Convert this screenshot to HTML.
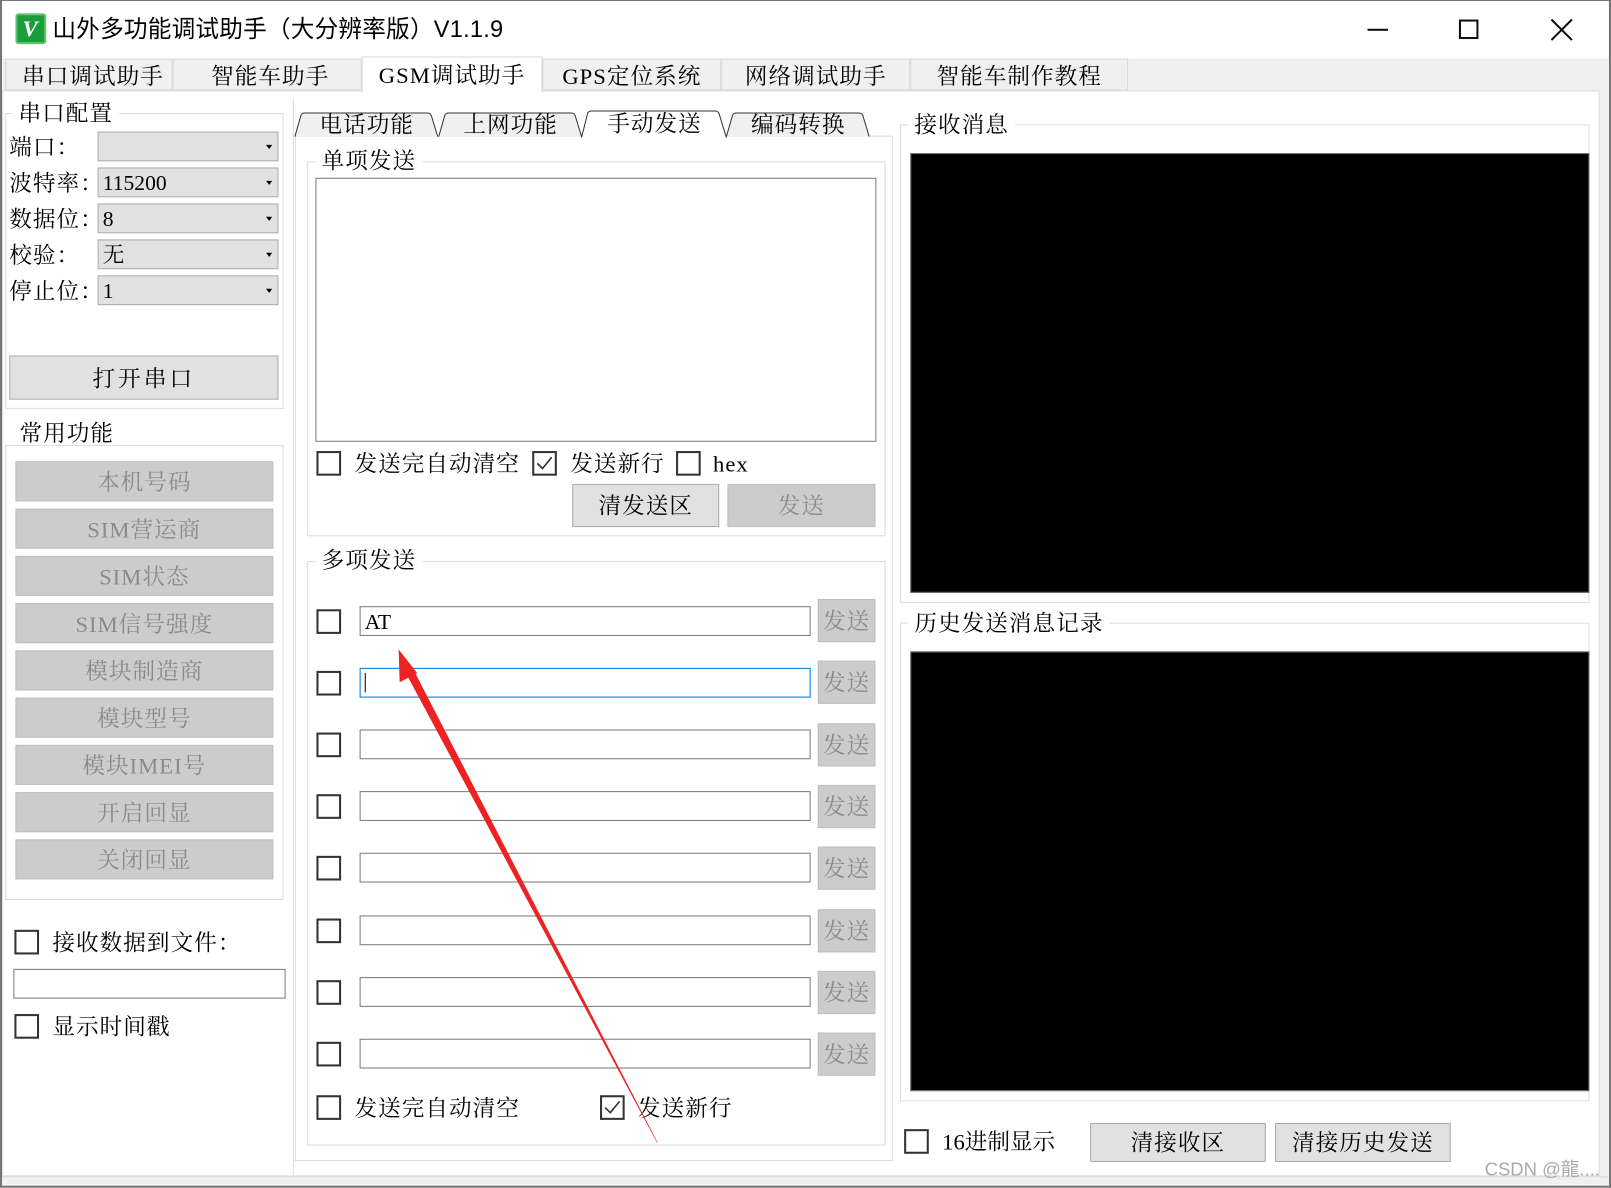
<!DOCTYPE html>
<html><head><meta charset="utf-8"><style>
html,body{margin:0;padding:0;width:1611px;height:1188px;overflow:hidden;background:#fff}
#w{position:absolute;left:0;top:0;width:1568px;height:1156px;transform:scale(1.02742);transform-origin:0 0;background:#fff;font-family:"Liberation Serif","Noto Serif CJK SC",serif;color:#000;font-size:22px;letter-spacing:1px}
.a{position:absolute;box-sizing:border-box}
.t{position:absolute;white-space:nowrap;line-height:1}
.grp{position:absolute;box-sizing:border-box;border:1px solid #dcdcdc}
.lbl{position:absolute;background:#fff;padding:0 6px;white-space:nowrap;line-height:1;font-size:22px}
.cb{position:absolute;width:24px;height:24px;box-sizing:border-box;border:2px solid #333;background:#fff}
.btn{position:absolute;box-sizing:border-box;background:#e1e1e1;border:1px solid #adadad;text-align:center;font-size:22px}
.dis{position:absolute;box-sizing:border-box;background:#cccccc;border:1px solid #bfbfbf;color:#8a8a8a;text-align:center;font-size:22px}
.combo{position:absolute;box-sizing:border-box;background:#e1e1e1;border:1px solid #adadad;left:95px;width:176px;height:29px;font-size:21px;line-height:29px;padding-left:4px;letter-spacing:0}
.combo:after{content:"";position:absolute;right:5px;top:12px;border-left:3px solid transparent;border-right:3px solid transparent;border-top:4px solid #000}
.inp{position:absolute;box-sizing:border-box;background:#fff;border:1px solid #7a7a7a}
.tab{position:absolute;top:57px;height:31px;box-sizing:border-box;border:1px solid #d9d9d9;background:#f0f0f0;text-align:center;line-height:33px;font-size:22px;letter-spacing:1px}
</style></head><body><div id="w">
<div class="a" style="left:0;top:0;width:1568px;height:1156px;border:2px solid #767676;border-top:1px solid #767676"></div>
<div class="a" style="left:15px;top:13px;width:30px;height:30px;background:#1a9e3a;border-radius:3px;border:2px solid #5cc46e"><div class="t" style="left:5px;top:2px;color:#fff;font-family:'Liberation Serif',serif;font-size:22px;font-weight:bold;font-style:italic">V</div></div>
<div class="t" style="left:51px;top:17px;font-family:'Liberation Sans','Noto Sans CJK SC',sans-serif;font-size:23px;letter-spacing:0.2px">山外多功能调试助手（大分辨率版）V1.1.9</div>
<div class="a" style="left:1331px;top:28px;width:20px;height:2px;background:#111"></div>
<div class="a" style="left:1420px;top:19px;width:19px;height:19px;border:2px solid #111"></div>
<svg class="a" style="left:1508px;top:17px" width="24" height="24"><path d="M2 2L22 22M22 2L2 22" stroke="#111" stroke-width="2"/></svg>
<div class="a" style="left:2px;top:57px;width:1564px;height:31px;background:#f0f0f0"></div>
<div class="a" style="left:1557px;top:88px;width:9px;height:1065px;background:#f0f0f0"></div>
<div class="a" style="left:2px;top:1145px;width:1564px;height:8px;background:#f0f0f0;border-top:1px solid #dcdcdc"></div>
<div class="a" style="left:2px;top:88px;width:1555px;height:1057px;border:1px solid #dcdcdc"></div>
<div class="tab" style="left:5px;width:163px;padding-left:8px">串口调试助手</div>
<div class="tab" style="left:168px;width:184px;padding-left:6px">智能车助手</div>
<div class="tab" style="left:528px;width:174px">GPS定位系统</div>
<div class="tab" style="left:702px;width:184px">网络调试助手</div>
<div class="tab" style="left:886px;width:212px">智能车制作教程</div>
<div class="tab" style="left:352px;width:176px;top:55px;height:35px;background:#fff;border-bottom:none;line-height:35px">GSM调试助手</div>
<div class="a" style="left:285px;top:95px;width:1px;height:1050px;background:#dcdcdc"></div>
<div class="grp" style="left:5px;top:110px;width:271px;height:288px"></div>
<div class="lbl" style="left:12px;top:100px">串口配置</div>
<div class="t" style="left:9px;top:133px">端口：</div><div class="combo" style="top:128px"></div>
<div class="t" style="left:9px;top:168px">波特率：</div><div class="combo" style="top:163px">115200</div>
<div class="t" style="left:9px;top:203px">数据位：</div><div class="combo" style="top:198px">8</div>
<div class="t" style="left:9px;top:238px">校验：</div><div class="combo" style="top:233px">无</div>
<div class="t" style="left:9px;top:273px">停止位：</div><div class="combo" style="top:268px">1</div>
<div class="btn" style="left:9px;top:346px;width:262px;height:43px;line-height:43px;letter-spacing:3px">打开串口</div>
<div class="grp" style="left:5px;top:433px;width:271px;height:443px"></div>
<div class="lbl" style="left:13px;top:411px">常用功能</div>
<div class="dis" style="left:15px;top:449px;width:251px;height:39px;line-height:39px">本机号码</div>
<div class="dis" style="left:15px;top:495px;width:251px;height:39px;line-height:39px">SIM营运商</div>
<div class="dis" style="left:15px;top:541px;width:251px;height:39px;line-height:39px">SIM状态</div>
<div class="dis" style="left:15px;top:587px;width:251px;height:39px;line-height:39px">SIM信号强度</div>
<div class="dis" style="left:15px;top:633px;width:251px;height:39px;line-height:39px">模块制造商</div>
<div class="dis" style="left:15px;top:679px;width:251px;height:39px;line-height:39px">模块型号</div>
<div class="dis" style="left:15px;top:725px;width:251px;height:39px;line-height:39px">模块IMEI号</div>
<div class="dis" style="left:15px;top:771px;width:251px;height:39px;line-height:39px">开启回显</div>
<div class="dis" style="left:15px;top:817px;width:251px;height:39px;line-height:39px">关闭回显</div>
<div class="cb" style="left:14px;top:905px"></div><div class="t" style="left:51px;top:907px">接收数据到文件：</div>
<div class="inp" style="left:13px;top:943px;width:265px;height:29px"></div>
<div class="cb" style="left:14px;top:987px"></div><div class="t" style="left:51px;top:989px">显示时间戳</div>
<div class="a" style="left:287px;top:132px;width:582px;height:998px;border:1px solid #dcdcdc;background:#fff"></div>
<svg class="a" style="left:286px;top:106px" width="570" height="30">
<path d="M1 27L7 6Q8 4 11 4H130Q133 4 134 7L140 27" fill="#f0f0f0" stroke="#333"/>
<path d="M141 27L147 6Q148 4 151 4H270Q273 4 274 7L280 27" fill="#f0f0f0" stroke="#333"/>
<path d="M421 27L427 6Q428 4 431 4H550Q553 4 554 7L560 27" fill="#f0f0f0" stroke="#333"/>
<path d="M280 28L286 4Q287 2 290 2H410Q413 2 414 5L421 28" fill="#fff" stroke="#333"/>
<rect x="281" y="26" width="139" height="4" fill="#fff"/>
</svg>
<div class="t" style="left:311px;top:111px">电话功能</div>
<div class="t" style="left:451px;top:111px">上网功能</div>
<div class="t" style="left:591px;top:110px">手动发送</div>
<div class="t" style="left:731px;top:111px">编码转换</div>
<div class="grp" style="left:299px;top:157px;width:563px;height:365px"></div>
<div class="lbl" style="left:307px;top:146px">单项发送</div>
<div class="inp" style="left:307px;top:173px;width:546px;height:257px"></div>
<div class="cb" style="left:308px;top:439px"></div><div class="t" style="left:345px;top:441px">发送完自动清空</div>
<div class="cb" style="left:518px;top:439px"></div><svg class="a" style="left:518px;top:439px" width="24" height="24"><path d="M5 12L10 17L19 6" stroke="#333" stroke-width="1.6" fill="none"/></svg><div class="t" style="left:555px;top:441px">发送新行</div>
<div class="cb" style="left:658px;top:439px"></div><div class="t" style="left:694px;top:441px">hex</div>
<div class="btn" style="left:557px;top:471px;width:143px;height:42px;line-height:42px">清发送区</div>
<div class="dis" style="left:708px;top:471px;width:144px;height:42px;line-height:42px">发送</div>
<div class="grp" style="left:299px;top:546px;width:563px;height:569px"></div>
<div class="lbl" style="left:307px;top:535px">多项发送</div>
<div class="cb" style="left:308px;top:593px"></div><div class="inp" style="left:350px;top:590px;width:439px;height:29px;font-size:21px;line-height:29px;padding-left:4px;letter-spacing:0">AT</div><div class="dis" style="left:796px;top:583px;width:56px;height:42px;line-height:42px">发送</div>
<div class="cb" style="left:308px;top:653px"></div><div class="inp" style="left:350px;top:650px;width:439px;height:29px;border-color:#0078d7"><div class="a" style="left:4px;top:4px;width:1px;height:19px;background:#000"></div></div><div class="dis" style="left:796px;top:643px;width:56px;height:42px;line-height:42px">发送</div>
<div class="cb" style="left:308px;top:713px"></div><div class="inp" style="left:350px;top:710px;width:439px;height:29px"></div><div class="dis" style="left:796px;top:704px;width:56px;height:42px;line-height:42px">发送</div>
<div class="cb" style="left:308px;top:773px"></div><div class="inp" style="left:350px;top:770px;width:439px;height:29px"></div><div class="dis" style="left:796px;top:764px;width:56px;height:42px;line-height:42px">发送</div>
<div class="cb" style="left:308px;top:833px"></div><div class="inp" style="left:350px;top:830px;width:439px;height:29px"></div><div class="dis" style="left:796px;top:824px;width:56px;height:42px;line-height:42px">发送</div>
<div class="cb" style="left:308px;top:894px"></div><div class="inp" style="left:350px;top:891px;width:439px;height:29px"></div><div class="dis" style="left:796px;top:885px;width:56px;height:42px;line-height:42px">发送</div>
<div class="cb" style="left:308px;top:954px"></div><div class="inp" style="left:350px;top:951px;width:439px;height:29px"></div><div class="dis" style="left:796px;top:945px;width:56px;height:42px;line-height:42px">发送</div>
<div class="cb" style="left:308px;top:1014px"></div><div class="inp" style="left:350px;top:1011px;width:439px;height:29px"></div><div class="dis" style="left:796px;top:1005px;width:56px;height:42px;line-height:42px">发送</div>
<div class="cb" style="left:308px;top:1066px"></div><div class="t" style="left:345px;top:1068px">发送完自动清空</div>
<div class="cb" style="left:584px;top:1066px"></div><svg class="a" style="left:584px;top:1066px" width="24" height="24"><path d="M5 12L10 17L19 6" stroke="#333" stroke-width="1.6" fill="none"/></svg><div class="t" style="left:621px;top:1068px">发送新行</div>
<div class="grp" style="left:876px;top:121px;width:671px;height:466px"></div>
<div class="lbl" style="left:884px;top:111px">接收消息</div>
<div class="a" style="left:886px;top:149px;width:661px;height:428px;background:#000;border:1px solid #777"></div>
<div class="grp" style="left:876px;top:606px;width:671px;height:466px"></div>
<div class="lbl" style="left:884px;top:596px">历史发送消息记录</div>
<div class="a" style="left:886px;top:634px;width:661px;height:428px;background:#000;border:1px solid #777"></div>
<div class="cb" style="left:880px;top:1099px"></div><div class="t" style="left:917px;top:1101px;letter-spacing:0">16进制显示</div>
<div class="btn" style="left:1061px;top:1093px;width:171px;height:38px;line-height:38px">清接收区</div>
<div class="btn" style="left:1241px;top:1093px;width:171px;height:38px;line-height:38px">清接历史发送</div>
<div class="t" style="left:1445px;top:1129px;font-family:'Liberation Sans','Noto Sans CJK SC',sans-serif;font-size:18px;color:#aaa;letter-spacing:0">CSDN @龍....</div>
<svg class="a" style="left:0;top:0" width="1568" height="1156">
<path d="M640 1112L639.6 1112.4L395 655L402 651Z" fill="#ee2222"/>
<path d="M388 632L389 664L406 655Z" fill="#ee2222"/>
</svg>
</div></body></html>
